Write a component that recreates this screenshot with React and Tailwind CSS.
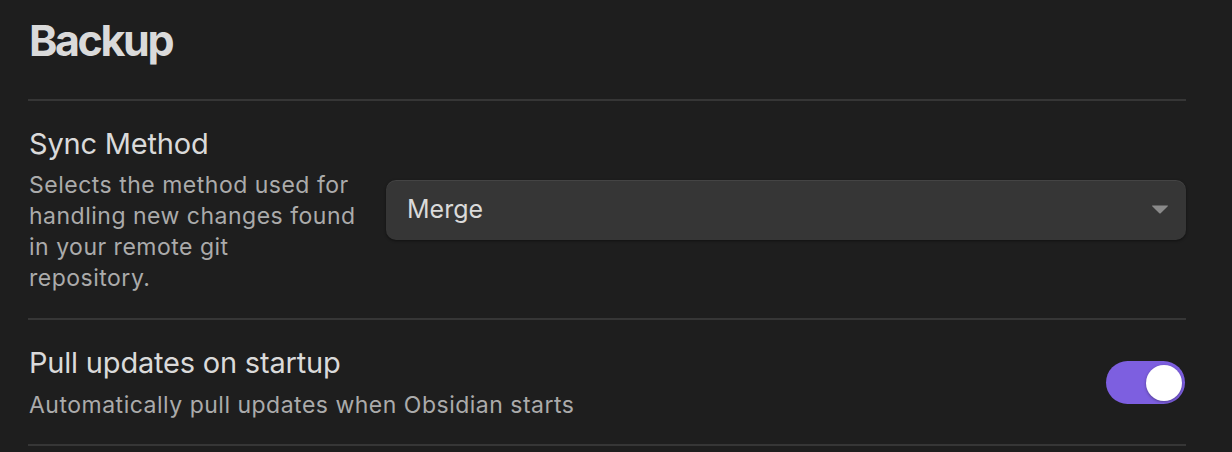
export default function App() {
  return (
    <div className="min-h-screen w-full bg-[#1e1e1e] pl-[28px] pr-[46px] font-['Inter',sans-serif]">
      <h1 className="pt-[14px] pb-[33px] pl-[1px] text-[43px] font-bold leading-[52px] tracking-[-2.4px] text-[#dadada]">
        Backup
      </h1>

      <div className="border-t-2 border-[#363636]">
        {/* Sync Method */}
        <div className="flex items-center border-b-2 border-[#363636] pt-[24px] pb-[24px]">
          <div className="w-[342px] shrink-0 pl-[1px]">
            <div className="text-[29px] leading-[38px] tracking-[-0.2px] text-[#dadada]">Sync Method</div>
            <div className="mt-[7px] text-[23px] leading-[31px] tracking-[0.5px] text-[#ababab]">
              Selects the method used for handling new changes found in your remote git<br />repository.
            </div>
          </div>
          <div className="ml-[16px] flex-1">
            <div className="flex h-[60px] items-center justify-between rounded-[10px] bg-[#363636] pl-[21px] pr-[17px] shadow-[inset_0_1px_0_rgba(255,255,255,0.07),0_1px_3px_rgba(0,0,0,0.45)]">
              <span className="text-[25px] text-[#dadada]">Merge</span>
              <svg width="18" height="9" viewBox="0 0 18 9">
                <path d="M1.5 0.5 L16.5 0.5 Q17.5 0.5 16.8 1.3 L9.7 8.2 Q9 8.9 8.3 8.2 L1.2 1.3 Q0.5 0.5 1.5 0.5 Z" fill="#8a8a8a" />
              </svg>
            </div>
          </div>
        </div>

        {/* Pull updates on startup */}
        <div className="flex items-center justify-between border-b-2 border-[#363636] pt-[24px] pb-[23px]">
          <div className="pl-[1px]">
            <div className="text-[29px] leading-[38px] tracking-[-0.2px] text-[#dadada]">Pull updates on startup</div>
            <div className="mt-[8px] text-[23px] leading-[31px] tracking-[0.5px] text-[#ababab]">
              Automatically pull updates when Obsidian starts
            </div>
          </div>
          <div className="relative mr-[1px] h-[43px] w-[79px] rounded-full bg-[#7d5fe0]">
            <div className="absolute right-[3px] top-[3.5px] h-[36px] w-[36px] rounded-full bg-white shadow-[0_1px_3px_rgba(0,0,0,0.35)]" />
          </div>
        </div>
      </div>
    </div>
  )
}
